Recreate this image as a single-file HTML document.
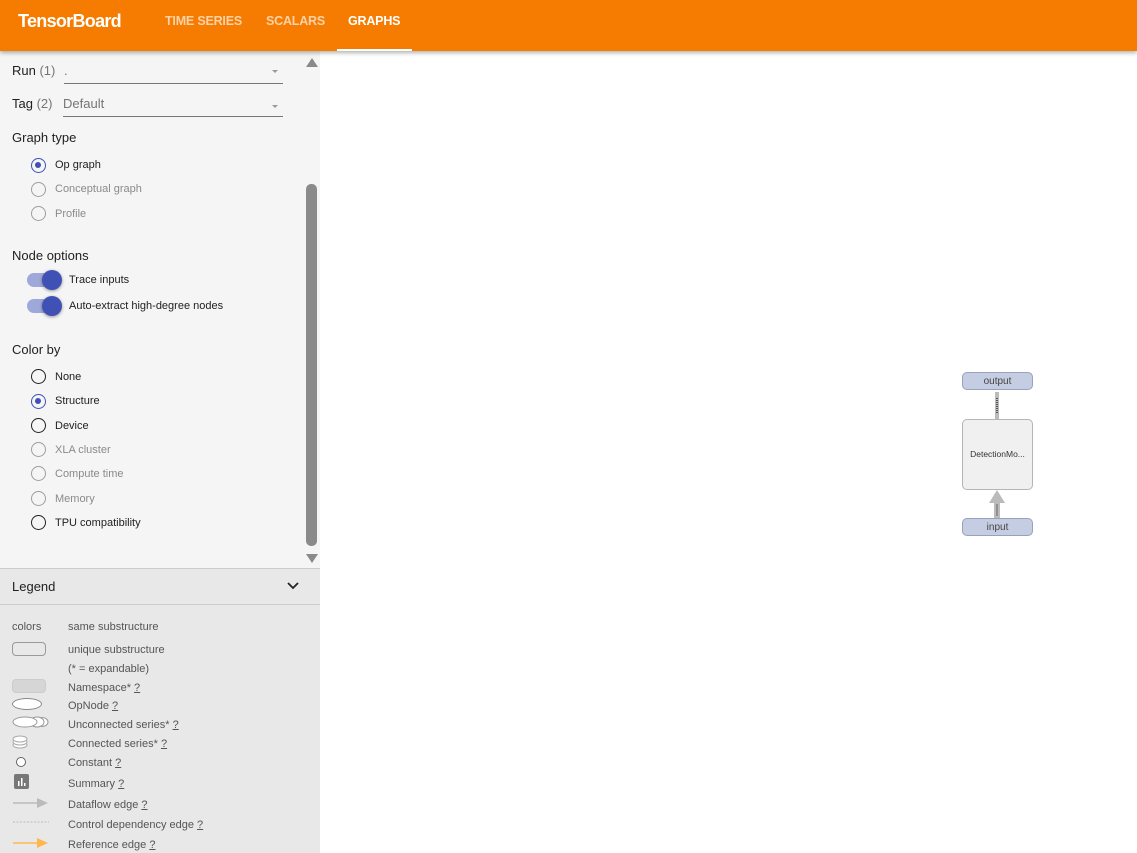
<!DOCTYPE html>
<html><head><meta charset="utf-8"><style>
*{box-sizing:border-box;margin:0;padding:0}
body{width:1137px;height:853px;overflow:hidden;font-family:"Liberation Sans",Roboto,sans-serif;background:#fff;position:relative}
.a{position:absolute;white-space:nowrap}
#hdr{left:0;top:0;width:1137px;height:51px;background:#f57c00;box-shadow:0 2px 4px rgba(0,0,0,.3);z-index:2}
.tab{font-size:12.5px;font-weight:bold;top:14px;color:rgba(255,255,255,.65)}
#side{left:0;top:51px;width:320px;height:517px;background:#f5f5f5}
.lbl{font-size:13px;color:#212121}
.sm{font-size:11px}
.r{position:absolute;width:15px;height:15px;border-radius:50%;border:1.5px solid #212121;left:31px}
.r.dis{border-color:#9e9e9e}
.r.on{border-color:#3f51b5}
.r.on::after{content:"";position:absolute;left:3px;top:3px;width:6px;height:6px;border-radius:50%;background:#3f51b5}
.tg{position:absolute;left:27px;width:34px;height:14px;border-radius:7px;background:#9fa8da}
.tg::after{content:"";position:absolute;left:15px;top:-3px;width:20px;height:20px;border-radius:50%;background:#3f51b5;box-shadow:0 1px 3px rgba(0,0,0,.4)}
#leg{left:0;top:568px;width:320px;height:285px;background:#e8e8e8;border-top:1px solid #ccc}
.lt{font-size:11px;color:#555;left:68px}
.lt u{text-decoration:underline}
</style></head><body>
<div id="hdr" class="a">
<div class="a" style="left:18px;top:11px;font-size:18px;color:#fff;font-weight:bold;letter-spacing:-0.7px">TensorBoard</div>
<div class="a tab" style="left:165px;letter-spacing:-0.2px">TIME SERIES</div>
<div class="a tab" style="left:266px;letter-spacing:-0.2px">SCALARS</div>
<div class="a tab" style="left:348px;color:#fff;letter-spacing:-0.2px">GRAPHS</div>
<div class="a" style="left:337px;top:49px;width:75px;height:2px;background:#fff"></div>
</div>
<div id="side" class="a">
<div class="a" style="left:306px;top:7px;width:0;height:0;border-left:6px solid transparent;border-right:6px solid transparent;border-bottom:9px solid #8a8a8a"></div>
<div class="a" style="left:306px;top:133px;width:11px;height:362px;border-radius:5px;background:#8a8a8a"></div>
<div class="a" style="left:306px;top:503px;width:0;height:0;border-left:6px solid transparent;border-right:6px solid transparent;border-top:9px solid #8a8a8a"></div>

<div class="a lbl" style="left:12px;top:12px">Run <span style="color:#757575">(1)</span></div>
<div class="a" style="left:64px;top:12px;font-size:13px;color:#757575">.</div>
<div class="a" style="left:272px;top:19px;border-left:3px solid transparent;border-right:3px solid transparent;border-top:3px solid #999"></div>
<div class="a" style="left:64px;top:32px;width:219px;height:1px;background:#777"></div>
<div class="a lbl" style="left:12px;top:45px">Tag <span style="color:#757575">(2)</span></div>
<div class="a" style="left:63px;top:45px;font-size:13px;color:#757575">Default</div>
<div class="a" style="left:272px;top:54px;border-left:3px solid transparent;border-right:3px solid transparent;border-top:3px solid #999"></div>
<div class="a" style="left:63px;top:65px;width:220px;height:1px;background:#777"></div>

<div class="a lbl" style="left:12px;top:79px">Graph type</div>
<div class="r on" style="top:107px"></div><div class="a sm" style="left:55px;top:108px;color:#212121">Op graph</div>
<div class="r dis" style="top:131px"></div><div class="a sm" style="left:55px;top:132px;color:#8a8a8a">Conceptual graph</div>
<div class="r dis" style="top:155px"></div><div class="a sm" style="left:55px;top:157px;color:#8a8a8a">Profile</div>

<div class="a lbl" style="left:12px;top:197px">Node options</div>
<div class="tg" style="top:222px"></div><div class="a sm" style="left:69px;top:223px;color:#212121">Trace inputs</div>
<div class="tg" style="top:248px"></div><div class="a sm" style="left:69px;top:249px;color:#212121">Auto-extract high-degree nodes</div>

<div class="a lbl" style="left:12px;top:291px">Color by</div>
<div class="r" style="top:318px"></div><div class="a sm" style="left:55px;top:320px;color:#212121">None</div>
<div class="r on" style="top:343px"></div><div class="a sm" style="left:55px;top:344px;color:#212121">Structure</div>
<div class="r" style="top:367px"></div><div class="a sm" style="left:55px;top:369px;color:#212121">Device</div>
<div class="r dis" style="top:391px"></div><div class="a sm" style="left:55px;top:393px;color:#8a8a8a">XLA cluster</div>
<div class="r dis" style="top:415px"></div><div class="a sm" style="left:55px;top:417px;color:#8a8a8a">Compute time</div>
<div class="r dis" style="top:440px"></div><div class="a sm" style="left:55px;top:442px;color:#8a8a8a">Memory</div>
<div class="r" style="top:464px"></div><div class="a sm" style="left:55px;top:466px;color:#212121">TPU compatibility</div>
</div>

<div id="leg" class="a">
<div class="a lbl" style="left:12px;top:10px">Legend</div>
<svg class="a" style="left:287px;top:13px" width="12" height="8"><path d="M1 1 L6 6 L11 1" stroke="#222" stroke-width="1.8" fill="none"/></svg>
<div class="a" style="left:0;top:35px;width:320px;height:1px;background:#ccc"></div>
<div class="a sm" style="left:12px;top:52px;color:#555">colors</div>
<div class="a lt" style="top:52px">same substructure</div>
<div class="a" style="left:12px;top:73px;width:34px;height:14px;border:1.5px solid #999;border-radius:4px"></div>
<div class="a lt" style="top:75px">unique substructure</div>
<div class="a lt" style="top:94px">(* = expandable)</div>
<div class="a" style="left:12px;top:110px;width:34px;height:14px;background:#d6d6d6;border:1px solid #ccc;border-radius:4px"></div>
<div class="a lt" style="top:113px">Namespace* <u>?</u></div>
<div class="a" style="left:12px;top:129px;width:30px;height:12px;background:#fff;border:1.5px solid #888;border-radius:50%"></div>
<div class="a lt" style="top:131px">OpNode <u>?</u></div>
<svg class="a" style="left:12px;top:147px" width="38" height="12"><ellipse cx="30" cy="6" rx="6" ry="4.5" fill="#fff" stroke="#999"/><ellipse cx="25" cy="6" rx="7" ry="5" fill="#fff" stroke="#999"/><ellipse cx="13" cy="6" rx="12" ry="5" fill="#fff" stroke="#999"/></svg>
<div class="a lt" style="top:150px">Unconnected series* <u>?</u></div>
<svg class="a" style="left:12px;top:166px" width="16" height="14"><ellipse cx="8" cy="10" rx="7" ry="3" fill="#fff" stroke="#aaa"/><ellipse cx="8" cy="7" rx="7" ry="3" fill="#fff" stroke="#aaa"/><ellipse cx="8" cy="4" rx="7" ry="3" fill="#fff" stroke="#aaa"/></svg>
<div class="a lt" style="top:169px">Connected series* <u>?</u></div>
<div class="a" style="left:16px;top:188px;width:10px;height:10px;border:1px solid #666;border-radius:50%;background:#fff"></div>
<div class="a lt" style="top:188px">Constant <u>?</u></div>
<svg class="a" style="left:14px;top:205px" width="15" height="15"><rect width="15" height="15" rx="2" fill="#777"/><rect x="4" y="7" width="1.5" height="5" fill="#fff"/><rect x="7" y="4" width="1.5" height="8" fill="#fff"/><rect x="10" y="9" width="1.5" height="3" fill="#fff"/></svg>
<div class="a lt" style="top:209px">Summary <u>?</u></div>
<svg class="a" style="left:13px;top:228px" width="36" height="12"><line x1="0" y1="6" x2="26" y2="6" stroke="#bbb" stroke-width="1.5"/><path d="M24 1 L35 6 L24 11Z" fill="#bbb"/></svg>
<div class="a lt" style="top:230px">Dataflow edge <u>?</u></div>
<svg class="a" style="left:13px;top:251px" width="36" height="4"><line x1="0" y1="2" x2="36" y2="2" stroke="#bbb" stroke-dasharray="2,1.5"/></svg>
<div class="a lt" style="top:250px">Control dependency edge <u>?</u></div>
<svg class="a" style="left:13px;top:268px" width="36" height="12"><line x1="0" y1="6" x2="26" y2="6" stroke="#ffb74d" stroke-width="1.5"/><path d="M24 1 L35 6 L24 11Z" fill="#ffb74d"/></svg>
<div class="a lt" style="top:270px">Reference edge <u>?</u></div>
</div>

<div class="a" style="left:962px;top:372px;width:71px;height:18px;background:#c5cde2;border:1px solid #98a2be;border-radius:5px;font-size:10px;color:#444;text-align:center;line-height:18px">output</div>
<div class="a" style="left:995px;top:392px;width:4px;height:27px;background:#bbb"></div>
<div class="a" style="left:996px;top:398px;width:2px;height:16px;background:repeating-linear-gradient(#555 0 1px,#bbb 1px 2px)"></div>
<div class="a" style="left:962px;top:419px;width:71px;height:71px;background:#f0f0f0;border:1px solid #b5b5b5;border-radius:5px;font-size:8.5px;color:#333;text-align:center;line-height:69px">DetectionMo...</div>
<svg class="a" style="left:987px;top:490px" width="20" height="28"><path d="M10 0 L18 13 L13 13 L13 28 L7 28 L7 13 L2 13Z" fill="#bbb"/><rect x="9" y="14" width="2" height="12" fill="#666" opacity=".5"/></svg>
<div class="a" style="left:962px;top:518px;width:71px;height:18px;background:#c5cde2;border:1px solid #98a2be;border-radius:5px;font-size:10px;color:#444;text-align:center;line-height:18px">input</div>
</body></html>
